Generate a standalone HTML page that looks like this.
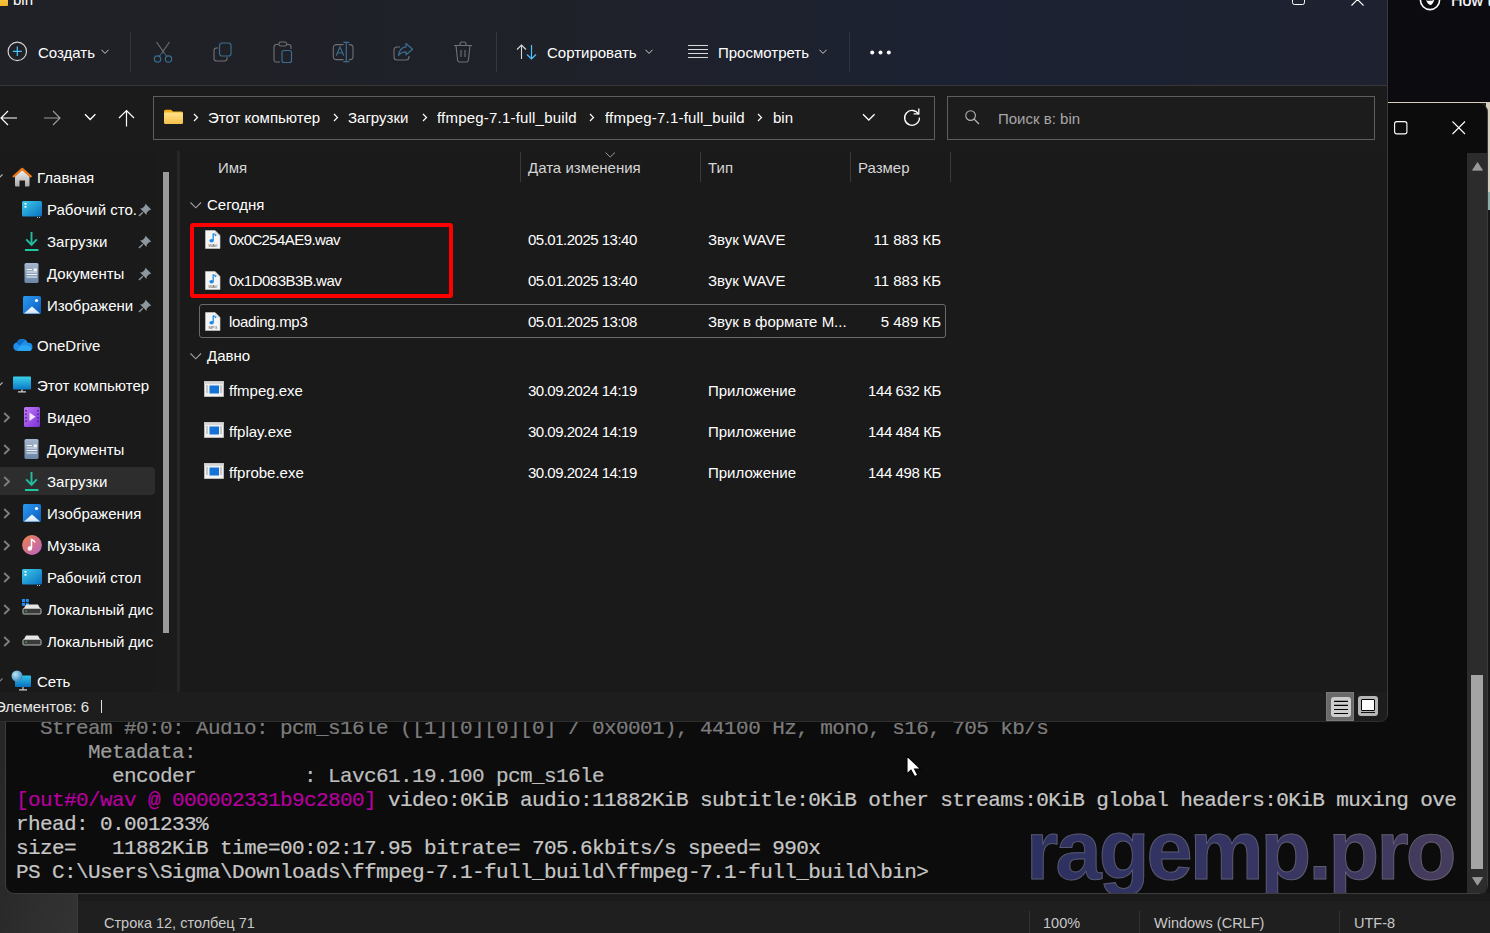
<!DOCTYPE html>
<html><head><meta charset="utf-8">
<style>
*{margin:0;padding:0;box-sizing:border-box}
html,body{width:1490px;height:933px;overflow:hidden;background:#1a1a1a;font-family:"Liberation Sans",sans-serif;color:#fff}
.a{position:absolute;white-space:pre}
.t{font-size:15px;line-height:18px}
svg{position:absolute;overflow:visible}
</style></head><body>
<!-- notepad status bar (bottom) -->
<div class="a" style="left:0;top:0;width:1490px;height:933px;background:#202020"></div>
<div class="a" style="left:0;top:700px;width:77px;height:233px;background:linear-gradient(100deg,#252525 0%,#2e2e2e 60%,#333 100%)"></div>
<div class="a" style="left:77px;top:893px;width:1413px;height:40px;background:#1f1f1f;border-left:1px solid #3a3a3a"></div>
<div class="a" style="left:78px;top:893px;width:1412px;height:8px;background:#1b1b1b"></div>
<div class="a" style="left:104px;top:915px;font-size:14.5px;line-height:17px;color:#c8c8c8">Строка 12, столбец 71</div>
<div class="a" style="left:1029px;top:911px;width:1px;height:22px;background:#333"></div>
<div class="a" style="left:1043px;top:915px;font-size:14.5px;line-height:17px;color:#c8c8c8">100%</div>
<div class="a" style="left:1139px;top:911px;width:1px;height:22px;background:#333"></div>
<div class="a" style="left:1154px;top:915px;font-size:14.5px;line-height:17px;color:#c8c8c8">Windows (CRLF)</div>
<div class="a" style="left:1339px;top:911px;width:1px;height:22px;background:#333"></div>
<div class="a" style="left:1354px;top:915px;font-size:14.5px;line-height:17px;color:#c8c8c8">UTF-8</div>
<!-- right dark area -->
<div class="a" style="left:1387px;top:0;width:103px;height:103px;background:#0b0b10"></div>
<svg style="left:1419px;top:-11px" width="22" height="22"><circle cx="11" cy="11" r="9.6" fill="none" stroke="#fff" stroke-width="1.6"/><path d="M7 11C8 14 10 16 12 16C13.5 15 15 12.5 15.5 10C14 11.5 13 12 12 11.5C10.5 12 8.5 12 7 11Z" fill="#fff"/></svg>
<div class="a" style="left:1451px;top:-8px;font-size:16px;line-height:18px;color:#fff;-webkit-text-stroke:0.2px #fff">How t</div>
<div class="a" style="left:1387px;top:102px;width:103px;height:1px;background:#d6cfbd"></div>
<div class="a" style="left:1486px;top:103px;width:4px;height:790px;background:#161616"></div><div class="a" style="left:1486px;top:103px;width:4px;height:89px;background:#d6cfbd"></div><div class="a" style="left:1486px;top:192px;width:4px;height:18px;background:#8fb0a8"></div>
<!-- terminal window -->
<div class="a" id="term" style="left:5px;top:103px;width:1483px;height:791px;background:#0c0c0c;border-radius:0 9px 9px 9px;border-left:1px solid #3c3c3c;border-bottom:1px solid #3c3c3c;border-right:1px solid #3a3a3a;overflow:hidden">
</div>
<svg style="left:1394px;top:121px" width="14" height="14"><rect x="0.6" y="0.6" width="12.3" height="12.3" rx="2.2" fill="none" stroke="#fff" stroke-width="1.1"/></svg>
<svg style="left:1452px;top:121px" width="14" height="14"><path d="M0.5 0.5L13 13M13 0.5L0.5 13" stroke="#fff" stroke-width="1.1"/></svg>
<div class="a" style="left:1467px;top:153px;width:20px;height:740px;background:#2c2c2c;border-radius:0 0 8px 0"></div>
<svg style="left:1472px;top:162px" width="11" height="9"><path d="M5.5 0.5L10.5 8.2H0.5Z" fill="#9a9a9a" stroke="#9a9a9a" stroke-width="0.8" stroke-linejoin="round"/></svg>
<div class="a" style="left:1471px;top:675px;width:12px;height:194px;background:#a4a4a4"></div>
<svg style="left:1472px;top:877px" width="11" height="9"><path d="M0.5 0.5H10.5L5.5 8.2Z" fill="#9a9a9a" stroke="#9a9a9a" stroke-width="0.8" stroke-linejoin="round"/></svg>
<!-- terminal text -->
<div class="a" style="left:16px;top:717px;font-family:'Liberation Mono',monospace;font-size:21px;letter-spacing:-0.6px;line-height:24px;color:#c6c6c6;-webkit-text-stroke:0.2px currentColor"><div style="color:#7c7c7c">  Stream #0:0: Audio: pcm_s16le ([1][0][0][0] / 0x0001), 44100 Hz, mono, s16, 705 kb/s</div><div style="color:#9c9c9c">      Metadata:</div><div style="color:#bdbdbd">        encoder         : Lavc61.19.100 pcm_s16le</div><div><span style="color:#b4009e">[out#0/wav @ 000002331b9c2800]</span> video:0KiB audio:11882KiB subtitle:0KiB other streams:0KiB global headers:0KiB muxing ove</div><div>rhead: 0.001233%</div><div>size=   11882KiB time=00:02:17.95 bitrate= 705.6kbits/s speed= 990x</div><div>PS C:\Users\Sigma\Downloads\ffmpeg-7.1-full_build\ffmpeg-7.1-full_build\bin&gt;</div></div>
<!-- watermark -->
<div class="a" style="left:1026px;top:801px;width:445px;height:92px;overflow:hidden">
<div class="a" style="left:0;top:0;font-size:83px;line-height:100px;font-weight:bold;letter-spacing:-2.9px;background:linear-gradient(90deg,#2d3160 0%,#353463 50%,#463c5d 100%);-webkit-background-clip:text;background-clip:text;color:transparent;-webkit-text-stroke:1px rgba(120,120,120,0.55)">ragemp.pro</div>
</div>
<!-- mouse cursor -->
<svg style="left:906px;top:755px" width="17" height="23"><path d="M1 1V19L5 15.2L8.6 21.5L11.8 20.2L8.6 14H14.6Z" fill="#fff" stroke="#000" stroke-width="1.1" stroke-linejoin="miter"/></svg>
<!-- EXPLORER -->
<div class="a" style="left:0;top:0;width:1388px;height:722px;background:#1b1b1b;border-radius:0 0 8px 0;overflow:hidden;border-right:1px solid #3a3a3a;border-bottom:1px solid #2e2e2e">
  <!-- mica top -->
  <div class="a" style="left:0;top:0;width:1387px;height:85px;background:linear-gradient(90deg,#202126 0%,#1f2129 40%,#1c2233 70%,#1e2230 100%)"></div>

  <!-- title -->
  <div class="a" style="left:0;top:-2px;width:8px;height:8px;background:linear-gradient(#f7c94a,#f2b52a);border-radius:0 1px 1px 0"></div>
  <div class="a" style="left:13px;top:-9px;font-size:15px;line-height:18px;color:#fff">bin</div>
  <svg style="left:1292px;top:-8px" width="13" height="13"><rect x="0.5" y="0.5" width="12" height="12" rx="2" fill="none" stroke="#fff" stroke-width="1"/></svg>
  <svg style="left:1351px;top:-7px" width="13" height="13"><path d="M0.5 0.5L12.5 12.5M12.5 0.5L0.5 12.5" stroke="#fff" stroke-width="1.1"/></svg>
  <!-- Создать -->
  <svg style="left:7px;top:41px" width="21" height="21"><circle cx="10.3" cy="10.4" r="9.2" fill="none" stroke="#d4d4d4" stroke-width="1.2"/><path d="M10.3 5.6V14.9M5.8 10.3H14.8" stroke="#4cc2ff" stroke-width="1.2"/></svg>
  <div class="a t" style="left:38px;top:44px">Создать</div>
  <svg style="left:101px;top:49px" width="9" height="6"><path d="M0.5 0.8L4 4.4L7.5 0.8" fill="none" stroke="#cfcfcf" stroke-width="1"/></svg>
  <div class="a" style="left:130px;top:32px;width:1px;height:40px;background:#34363c"></div>
  <!-- cut -->
  <svg style="left:153px;top:41px" width="20" height="22"><path d="M3.5 1L11.5 12.5M16.5 1L8.5 12.5" stroke="#6f7176" stroke-width="1.1" fill="none"/><path d="M11.5 12.5L14 15.5M8.5 12.5L6 15.5" stroke="#3b6d8e" stroke-width="1.1"/><circle cx="4.5" cy="18" r="3.2" fill="none" stroke="#3b6d8e" stroke-width="1.2"/><circle cx="15.5" cy="18" r="3.2" fill="none" stroke="#3b6d8e" stroke-width="1.2"/></svg>
  <!-- copy -->
  <svg style="left:213px;top:42px" width="20" height="20"><path d="M5 6H3.5A2.5 2.5 0 0 0 1 8.5V16.5A2.5 2.5 0 0 0 3.5 19H11.5A2.5 2.5 0 0 0 14 16.5V15" fill="none" stroke="#6f7176" stroke-width="1.1"/><rect x="6.5" y="1" width="11.5" height="13" rx="2.5" fill="none" stroke="#3b6d8e" stroke-width="1.2"/></svg>
  <!-- paste -->
  <svg style="left:273px;top:41px" width="20" height="22"><path d="M5.5 3.5H3.5A2.5 2.5 0 0 0 1 6V18.5A2.5 2.5 0 0 0 3.5 21H7M14 3.5H15.5A2.5 2.5 0 0 1 18 6V8" fill="none" stroke="#6f7176" stroke-width="1.1"/><rect x="6" y="1" width="7.5" height="4" rx="1.5" fill="none" stroke="#6f7176" stroke-width="1.1"/><rect x="9" y="9.5" width="9.5" height="12" rx="2" fill="none" stroke="#3b6d8e" stroke-width="1.2"/></svg>
  <!-- rename -->
  <svg style="left:332px;top:41px" width="22" height="22"><path d="M11.5 3.6H4.5A3.2 3.2 0 0 0 1.3 6.8V15.4A3.2 3.2 0 0 0 4.5 18.6H11.5M16.8 3.6H17.8A3.2 3.2 0 0 1 21 6.8V15.4A3.2 3.2 0 0 1 17.8 18.6H16.8" fill="none" stroke="#6f7176" stroke-width="1.1"/><path d="M4.2 14.8L8 6L11.8 14.8M5.4 12H10.6" fill="none" stroke="#3b6d8e" stroke-width="1.1"/><path d="M14.3 1.2V20.6M11.3 1.3H17.3M11.3 20.6H17.3" stroke="#3b6d8e" stroke-width="1.2"/></svg>
  <!-- share -->
  <svg style="left:393px;top:42px" width="21" height="20"><path d="M7 5H4A3 3 0 0 0 1 8V15A3 3 0 0 0 4 18H13A3 3 0 0 0 16 15V14" fill="none" stroke="#6f7176" stroke-width="1.1"/><path d="M13 1.5L19.5 7.3L13 12.8V9.8C9.5 9.8 7.3 11 5.5 13.5C6 9 8.5 5.3 13 4.8Z" fill="none" stroke="#3b6d8e" stroke-width="1.2" stroke-linejoin="round"/></svg>
  <!-- delete -->
  <svg style="left:453px;top:41px" width="20" height="22"><path d="M1 4.5H19M7 4.5V3A2 2 0 0 1 9 1H11A2 2 0 0 1 13 3V4.5M3 4.5L4.5 18.5A2.5 2.5 0 0 0 7 21H13A2.5 2.5 0 0 0 15.5 18.5L17 4.5M8 9V16M12 9V16" fill="none" stroke="#6f7176" stroke-width="1.1"/></svg>
  <div class="a" style="left:496px;top:32px;width:1px;height:40px;background:#343740"></div>
  <!-- sort -->
  <svg style="left:516px;top:44px" width="22" height="16"><path d="M5.5 15V1M1 5.5L5.5 1L10 5.5" fill="none" stroke="#d8d8d8" stroke-width="1.1"/><path d="M15.5 1V15M11 10.5L15.5 15L20 10.5" fill="none" stroke="#4cc2ff" stroke-width="1.2"/></svg>
  <div class="a t" style="left:547px;top:44px">Сортировать</div>
  <svg style="left:645px;top:49px" width="9" height="6"><path d="M0.5 0.8L4 4.4L7.5 0.8" fill="none" stroke="#cfcfcf" stroke-width="1"/></svg>
  <!-- view -->
  <svg style="left:688px;top:45px" width="21" height="14"><path d="M0 0.5H20M0 4.5H20M0 8.5H20M0 12.5H20" stroke="#d8d8d8" stroke-width="1.1"/></svg>
  <div class="a t" style="left:718px;top:44px">Просмотреть</div>
  <svg style="left:819px;top:49px" width="9" height="6"><path d="M0.5 0.8L4 4.4L7.5 0.8" fill="none" stroke="#cfcfcf" stroke-width="1"/></svg>
  <div class="a" style="left:849px;top:32px;width:1px;height:40px;background:#30343f"></div>
  <svg style="left:870px;top:50px" width="22" height="6"><circle cx="2.2" cy="2.5" r="2" fill="#fff"/><circle cx="10.5" cy="2.5" r="2" fill="#fff"/><circle cx="18.8" cy="2.5" r="2" fill="#fff"/></svg>
  <div class="a" style="left:0;top:85px;width:1387px;height:1px;background:#363636"></div>
  <!-- address row -->
  <div class="a" style="left:0;top:86px;width:1387px;height:65px;background:#1b1b1b"></div>

  <!-- nav arrows -->
  <svg style="left:0;top:110px" width="18" height="16"><path d="M17 8H1M8 1L1 8L8 15" fill="none" stroke="#fff" stroke-width="1.2"/></svg>
  <svg style="left:43px;top:110px" width="18" height="16"><path d="M1 8H17M10 1L17 8L10 15" fill="none" stroke="#9b9b9b" stroke-width="1.2"/></svg>
  <svg style="left:84px;top:113px" width="13" height="9"><path d="M1 1.2L6.2 6.5L11.4 1.2" fill="none" stroke="#fff" stroke-width="1.3"/></svg>
  <svg style="left:118px;top:109px" width="17" height="18"><path d="M8.5 17.5V1.5M1 9L8.5 1.5L16 9" fill="none" stroke="#fff" stroke-width="1.2"/></svg>
  <!-- address box -->
  <div class="a" style="left:153px;top:96px;width:782px;height:44px;border:1px solid #5e5e5e;background:#1c1c1c"></div>
  <svg style="left:164px;top:109px" width="20" height="16"><defs><linearGradient id="fg" x1="0" y1="0" x2="0" y2="1"><stop offset="0" stop-color="#ffe28a"/><stop offset="1" stop-color="#f5c04a"/></linearGradient></defs><path d="M1.5 0.8H7L9 2.6H17.5A1.5 1.5 0 0 1 19 4.1V5H0V2.3A1.5 1.5 0 0 1 1.5 0.8Z" fill="#f2b01e"/><rect x="0" y="3.6" width="19" height="11.5" rx="1.4" fill="url(#fg)"/></svg>
  <svg style="left:193px;top:113px" width="6" height="9"><path d="M1 1L4.5 4.5L1 8" fill="none" stroke="#fff" stroke-width="1.2"/></svg>
  <div class="a t" style="left:208px;top:109px">Этот компьютер</div>
  <svg style="left:333px;top:113px" width="6" height="9"><path d="M1 1L4.5 4.5L1 8" fill="none" stroke="#fff" stroke-width="1.2"/></svg>
  <div class="a t" style="left:348px;top:109px">Загрузки</div>
  <svg style="left:422px;top:113px" width="6" height="9"><path d="M1 1L4.5 4.5L1 8" fill="none" stroke="#fff" stroke-width="1.2"/></svg>
  <div class="a t" style="left:437px;top:109px;letter-spacing:0.2px">ffmpeg-7.1-full_build</div>
  <svg style="left:589px;top:113px" width="6" height="9"><path d="M1 1L4.5 4.5L1 8" fill="none" stroke="#fff" stroke-width="1.2"/></svg>
  <div class="a t" style="left:605px;top:109px;letter-spacing:0.2px">ffmpeg-7.1-full_build</div>
  <svg style="left:757px;top:113px" width="6" height="9"><path d="M1 1L4.5 4.5L1 8" fill="none" stroke="#fff" stroke-width="1.2"/></svg>
  <div class="a t" style="left:773px;top:109px">bin</div>
  <svg style="left:862px;top:113px" width="14" height="9"><path d="M1 1.3L6.8 7L12.6 1.3" fill="none" stroke="#fff" stroke-width="1.3"/></svg>
  <svg style="left:903px;top:108px" width="18" height="18"><path d="M15.6 6.5A7.4 7.4 0 1 0 16.4 9.5" fill="none" stroke="#fff" stroke-width="1.3"/><path d="M10.6 5.8H15.8V0.6" fill="none" stroke="#fff" stroke-width="1.3"/></svg>
  <!-- search box -->
  <div class="a" style="left:947px;top:96px;width:428px;height:44px;border:1px solid #5e5e5e;background:#1c1c1c"></div>
  <svg style="left:965px;top:110px" width="15" height="15"><circle cx="5.6" cy="5.6" r="4.8" fill="none" stroke="#b4b4b4" stroke-width="1.1"/><path d="M9 9L14 14" stroke="#b4b4b4" stroke-width="1.2"/></svg>
  <div class="a t" style="left:998px;top:110px;color:#a8a8a8">Поиск в: bin</div>
  <!-- content -->
  <div class="a" style="left:0;top:151px;width:1387px;height:541px;background:#1a1a1a"></div>

  <!-- NAV PANE -->
  <div class="a" style="left:155px;top:151px;width:22px;height:541px;background:#1b1b1b"></div>
  <div class="a" style="left:163px;top:172px;width:6px;height:461px;background:#9b9b9b"></div>
  <div class="a" style="left:177px;top:151px;width:3px;height:541px;background:#262626"></div>
  <div class="a" style="left:0;top:467px;width:155px;height:28px;background:#2d2d2d;border-radius:0 4px 4px 0"></div>
  <svg style="left:-4px;top:174px" width="7" height="5"><path d="M0.5 0.5L3.5 3.5L6.5 0.5" fill="none" stroke="#bbb" stroke-width="1.1"/></svg>
  <svg style="left:-4px;top:382px" width="7" height="5"><path d="M0.5 0.5L3.5 3.5L6.5 0.5" fill="none" stroke="#bbb" stroke-width="1.1"/></svg>
  <svg style="left:12px;top:167px" width="21" height="20"><defs><linearGradient id="hm" x1="0" y1="0" x2="0" y2="1"><stop offset="0" stop-color="#f0f0f0"/><stop offset="1" stop-color="#a8a8a8"/></linearGradient></defs><path d="M3 9.5L10.2 3L17.5 9.5V18.5A1 1 0 0 1 16.5 19.5H13V13.5H7.5V19.5H4A1 1 0 0 1 3 18.5Z" fill="url(#hm)"/><path d="M1 10L10.2 1.8L19.5 10" fill="none" stroke="#f07a1a" stroke-width="2.2" stroke-linejoin="round"/></svg>
  <div class="a t" style="left:37px;top:169px">Главная</div>
  <svg style="left:22px;top:201px" width="20" height="17"><defs><linearGradient id="dk201" x1="0" y1="0" x2="1" y2="1"><stop offset="0" stop-color="#3ccbe8"/><stop offset="1" stop-color="#0a6fc2"/></linearGradient></defs><rect x="0" y="0" width="20" height="15.5" rx="1.5" fill="url(#dk201)"/><rect x="2.5" y="2" width="2" height="1.6" fill="#fff"/><rect x="2.5" y="5" width="2" height="1.6" fill="#fff"/><rect x="15" y="16" width="1" height="1" fill="#bbb"/><rect x="17" y="16" width="1" height="1" fill="#bbb"/></svg>
  <div class="a t" style="left:47px;top:201px">Рабочий сто.</div>
  <svg style="left:138px;top:203px" width="14" height="14"><path d="M7.5 0.8L13.2 6.5L11.2 7.2L8.8 9.6L8.6 12L2 5.4L4.4 5.2L6.8 2.8Z" fill="#8e979e"/><path d="M4.8 9.2L1 13" stroke="#8e979e" stroke-width="1.4"/></svg>
  <svg style="left:24px;top:231px" width="16" height="21"><path d="M7.5 1V13.8M2.2 8.3L7.5 13.8L12.8 8.3" fill="none" stroke="#22bf9f" stroke-width="1.9"/><path d="M1 19H14.5" stroke="#1fc6a2" stroke-width="2"/></svg>
  <div class="a t" style="left:47px;top:233px">Загрузки</div>
  <svg style="left:138px;top:235px" width="14" height="14"><path d="M7.5 0.8L13.2 6.5L11.2 7.2L8.8 9.6L8.6 12L2 5.4L4.4 5.2L6.8 2.8Z" fill="#8e979e"/><path d="M4.8 9.2L1 13" stroke="#8e979e" stroke-width="1.4"/></svg>
  <svg style="left:24px;top:263px" width="16" height="21"><defs><linearGradient id="dc263" x1="0" y1="0" x2="0" y2="1"><stop offset="0" stop-color="#a6b7cc"/><stop offset="1" stop-color="#6d87a8"/></linearGradient></defs><rect x="0.5" y="0" width="14" height="20" rx="1.5" fill="url(#dc263)"/><path d="M2.5 6.5H8M2.5 9H13M2.5 11.5H13M2.5 14H13" stroke="#f2f4f7" stroke-width="1"/><rect x="9.5" y="5.5" width="3.5" height="2.5" fill="#f2f4f7"/></svg>
  <div class="a t" style="left:47px;top:265px">Документы</div>
  <svg style="left:138px;top:267px" width="14" height="14"><path d="M7.5 0.8L13.2 6.5L11.2 7.2L8.8 9.6L8.6 12L2 5.4L4.4 5.2L6.8 2.8Z" fill="#8e979e"/><path d="M4.8 9.2L1 13" stroke="#8e979e" stroke-width="1.4"/></svg>
  <svg style="left:23px;top:296px" width="19" height="19"><defs><linearGradient id="pc296" x1="0" y1="0" x2="1" y2="1"><stop offset="0" stop-color="#2b9af0"/><stop offset="1" stop-color="#0a5cc0"/></linearGradient><linearGradient id="pm296" x1="0" y1="0" x2="0" y2="1"><stop offset="0" stop-color="#ffffff"/><stop offset="1" stop-color="#cfe3f7"/></linearGradient></defs><rect x="0" y="0" width="18" height="18" rx="1.6" fill="url(#pc296)"/><path d="M1 17.5L9 10.5L17 17.5Z" fill="url(#pm296)"/><circle cx="13.5" cy="4.5" r="1.6" fill="#fff"/></svg>
  <div class="a t" style="left:47px;top:297px;width:90px;overflow:hidden">Изображени</div>
  <svg style="left:138px;top:299px" width="14" height="14"><path d="M7.5 0.8L13.2 6.5L11.2 7.2L8.8 9.6L8.6 12L2 5.4L4.4 5.2L6.8 2.8Z" fill="#8e979e"/><path d="M4.8 9.2L1 13" stroke="#8e979e" stroke-width="1.4"/></svg>
  <svg style="left:12px;top:337px" width="21" height="15"><path d="M5 13.8A4.2 4.2 0 0 1 4.8 5.5A6 6 0 0 1 15.8 5.8A4 4 0 0 1 17 13.8Z" fill="#1f8ee8"/><path d="M5 13.8C6.5 9 10 7.5 13.5 8.5C16.5 8 19.5 10 19.5 12A2 2 0 0 1 17.5 14Z" fill="#2aa6f5"/><path d="M4.8 5.5A6 6 0 0 1 13 3.5C11 5 9 7 8 8.5C6 7.5 5 6.5 4.8 5.5Z" fill="#0e6ecb"/></svg>
  <div class="a t" style="left:37px;top:337px">OneDrive</div>
  <svg style="left:13px;top:376px" width="19" height="17"><defs><linearGradient id="mn" x1="0" y1="0" x2="0" y2="1"><stop offset="0" stop-color="#38d2e8"/><stop offset="1" stop-color="#0c78c8"/></linearGradient></defs><rect x="0" y="0.5" width="18" height="13" rx="0.8" fill="url(#mn)"/><path d="M9 13.5V15.5M5 15.8H13" stroke="#cfcfcf" stroke-width="1.3"/></svg>
  <div class="a t" style="left:37px;top:377px">Этот компьютер</div>
  <svg style="left:3px;top:412px" width="8" height="11"><path d="M1.2 1L6 5.5L1.2 10" fill="none" stroke="#808080" stroke-width="1.8"/></svg>
  <svg style="left:24px;top:407px" width="17" height="20"><defs><linearGradient id="vd" x1="0" y1="0" x2="1" y2="1"><stop offset="0" stop-color="#c27af7"/><stop offset="1" stop-color="#7a2fd6"/></linearGradient></defs><rect x="0" y="0" width="16" height="20" rx="1.5" fill="url(#vd)"/><path d="M5.5 5.5L11.5 9.8L5.5 14Z" fill="#f0e6fb"/><g fill="#3a1a6a"><rect x="1.3" y="3" width="1.4" height="1.4"/><rect x="1.3" y="6.5" width="1.4" height="1.4"/><rect x="1.3" y="10" width="1.4" height="1.4"/><rect x="1.3" y="13.5" width="1.4" height="1.4"/><rect x="13.3" y="3" width="1.4" height="1.4"/><rect x="13.3" y="6.5" width="1.4" height="1.4"/><rect x="13.3" y="10" width="1.4" height="1.4"/><rect x="13.3" y="13.5" width="1.4" height="1.4"/></g></svg>
  <div class="a t" style="left:47px;top:409px">Видео</div>
  <svg style="left:3px;top:444px" width="8" height="11"><path d="M1.2 1L6 5.5L1.2 10" fill="none" stroke="#808080" stroke-width="1.8"/></svg>
  <svg style="left:24px;top:439px" width="16" height="21"><defs><linearGradient id="dc439" x1="0" y1="0" x2="0" y2="1"><stop offset="0" stop-color="#a6b7cc"/><stop offset="1" stop-color="#6d87a8"/></linearGradient></defs><rect x="0.5" y="0" width="14" height="20" rx="1.5" fill="url(#dc439)"/><path d="M2.5 6.5H8M2.5 9H13M2.5 11.5H13M2.5 14H13" stroke="#f2f4f7" stroke-width="1"/><rect x="9.5" y="5.5" width="3.5" height="2.5" fill="#f2f4f7"/></svg>
  <div class="a t" style="left:47px;top:441px">Документы</div>
  <svg style="left:3px;top:476px" width="8" height="11"><path d="M1.2 1L6 5.5L1.2 10" fill="none" stroke="#808080" stroke-width="1.8"/></svg>
  <svg style="left:24px;top:471px" width="16" height="21"><path d="M7.5 1V13.8M2.2 8.3L7.5 13.8L12.8 8.3" fill="none" stroke="#22bf9f" stroke-width="1.9"/><path d="M1 19H14.5" stroke="#1fc6a2" stroke-width="2"/></svg>
  <div class="a t" style="left:47px;top:473px">Загрузки</div>
  <svg style="left:3px;top:508px" width="8" height="11"><path d="M1.2 1L6 5.5L1.2 10" fill="none" stroke="#808080" stroke-width="1.8"/></svg>
  <svg style="left:23px;top:504px" width="19" height="19"><defs><linearGradient id="pc504" x1="0" y1="0" x2="1" y2="1"><stop offset="0" stop-color="#2b9af0"/><stop offset="1" stop-color="#0a5cc0"/></linearGradient><linearGradient id="pm504" x1="0" y1="0" x2="0" y2="1"><stop offset="0" stop-color="#ffffff"/><stop offset="1" stop-color="#cfe3f7"/></linearGradient></defs><rect x="0" y="0" width="18" height="18" rx="1.6" fill="url(#pc504)"/><path d="M1 17.5L9 10.5L17 17.5Z" fill="url(#pm504)"/><circle cx="13.5" cy="4.5" r="1.6" fill="#fff"/></svg>
  <div class="a t" style="left:47px;top:505px">Изображения</div>
  <svg style="left:3px;top:540px" width="8" height="11"><path d="M1.2 1L6 5.5L1.2 10" fill="none" stroke="#808080" stroke-width="1.8"/></svg>
  <svg style="left:22px;top:535px" width="20" height="20"><defs><linearGradient id="mu" x1="0" y1="0" x2="1" y2="1"><stop offset="0" stop-color="#f0834a"/><stop offset="1" stop-color="#b962c8"/></linearGradient></defs><circle cx="10" cy="10" r="9.9" fill="url(#mu)"/><path d="M9.5 13.2V4.5C11 5 12.5 6 13 7.5" fill="none" stroke="#fff" stroke-width="1.5"/><circle cx="7.8" cy="13.5" r="2.2" fill="#fff"/></svg>
  <div class="a t" style="left:47px;top:537px">Музыка</div>
  <svg style="left:3px;top:572px" width="8" height="11"><path d="M1.2 1L6 5.5L1.2 10" fill="none" stroke="#808080" stroke-width="1.8"/></svg>
  <svg style="left:22px;top:569px" width="20" height="17"><defs><linearGradient id="dk569" x1="0" y1="0" x2="1" y2="1"><stop offset="0" stop-color="#3ccbe8"/><stop offset="1" stop-color="#0a6fc2"/></linearGradient></defs><rect x="0" y="0" width="20" height="15.5" rx="1.5" fill="url(#dk569)"/><rect x="2.5" y="2" width="2" height="1.6" fill="#fff"/><rect x="2.5" y="5" width="2" height="1.6" fill="#fff"/><rect x="15" y="16" width="1" height="1" fill="#bbb"/><rect x="17" y="16" width="1" height="1" fill="#bbb"/></svg>
  <div class="a t" style="left:47px;top:569px">Рабочий стол</div>
  <svg style="left:3px;top:604px" width="8" height="11"><path d="M1.2 1L6 5.5L1.2 10" fill="none" stroke="#808080" stroke-width="1.8"/></svg>
  <svg style="left:22px;top:599px" width="20" height="17"><rect x="0" y="0" width="3" height="3" fill="#1f8ff0"/><rect x="3.8" y="0" width="3" height="3" fill="#1f8ff0"/><rect x="0" y="3.8" width="3" height="3" fill="#1f8ff0"/><rect x="3.8" y="3.8" width="3" height="3" fill="#1f8ff0"/><path d="M4 5.5H16L18.5 10H1.5Z" fill="#e6e6e6"/><rect x="1" y="9.5" width="18" height="5.5" rx="0.8" fill="#3a3a3a" stroke="#b8b8b8" stroke-width="1"/><rect x="3.5" y="11.5" width="1.3" height="1.3" fill="#3fd64a"/></svg>
  <div class="a t" style="left:47px;top:601px;width:107px;overflow:hidden">Локальный дис</div>
  <svg style="left:3px;top:636px" width="8" height="11"><path d="M1.2 1L6 5.5L1.2 10" fill="none" stroke="#808080" stroke-width="1.8"/></svg>
  <svg style="left:22px;top:630px" width="20" height="17"><path d="M4 5.5H16L18.5 10H1.5Z" fill="#e6e6e6"/><rect x="1" y="9.5" width="18" height="5.5" rx="0.8" fill="#3a3a3a" stroke="#b8b8b8" stroke-width="1"/><rect x="3.5" y="11.5" width="1.3" height="1.3" fill="#3fd64a"/></svg>
  <div class="a t" style="left:47px;top:633px;width:107px;overflow:hidden">Локальный дис</div>
  <svg style="left:-4px;top:678px" width="7" height="5"><path d="M0.5 0.5L3.5 3.5L6.5 0.5" fill="none" stroke="#888" stroke-width="1.1"/></svg>
  <svg style="left:11px;top:670px" width="22" height="22"><defs><linearGradient id="nw" x1="0" y1="0" x2="0" y2="1"><stop offset="0" stop-color="#2ec4ea"/><stop offset="1" stop-color="#0b6fc0"/></linearGradient><radialGradient id="gl" cx="0.35" cy="0.35" r="0.7"><stop offset="0" stop-color="#b9e4f7"/><stop offset="1" stop-color="#3a89c0"/></radialGradient></defs><rect x="4" y="5.5" width="16" height="11.5" rx="0.8" fill="url(#nw)"/><path d="M12 17V19.5M8 19.8H16" stroke="#cfcfcf" stroke-width="1.2"/><circle cx="6" cy="6" r="5.5" fill="url(#gl)"/></svg>
  <div class="a t" style="left:37px;top:673px">Сеть</div>

  <!-- FILE LIST -->
  <div class="a t" style="left:218px;top:159px;color:#d6d6d6">Имя</div>
  <div class="a" style="left:520px;top:152px;width:1px;height:30px;background:#3a3a3a"></div>
  <svg style="left:605px;top:152px" width="11" height="6"><path d="M0.5 0.5L5.2 5L10 0.5" fill="none" stroke="#9a9a9a" stroke-width="1"/></svg>
  <div class="a t" style="left:528px;top:159px;color:#d6d6d6">Дата изменения</div>
  <div class="a" style="left:700px;top:152px;width:1px;height:30px;background:#3a3a3a"></div>
  <div class="a t" style="left:708px;top:159px;color:#d6d6d6">Тип</div>
  <div class="a" style="left:850px;top:152px;width:1px;height:30px;background:#3a3a3a"></div>
  <div class="a t" style="left:858px;top:159px;color:#d6d6d6">Размер</div>
  <div class="a" style="left:950px;top:152px;width:1px;height:30px;background:#3a3a3a"></div>
  <svg style="left:190px;top:202px" width="12" height="7"><path d="M0.5 0.5L5.8 5.8L11 0.5" fill="none" stroke="#a0a0a0" stroke-width="1.1"/></svg>
  <div class="a t" style="left:207px;top:196px">Сегодня</div>
  <svg style="left:205px;top:230px" width="16" height="19"><path d="M0.5 0.5H10L15 5.5V18.5H0.5Z" fill="#f4f4f4" stroke="#d0d0d0" stroke-width="0.6"/><path d="M10 0.5V5.5H15" fill="#dcdcdc"/><path d="M8.2 3.5V10.5M8.2 3.5C9.5 4 10.5 4.8 10.8 6" fill="none" stroke="#1a8ae6" stroke-width="1.3"/><ellipse cx="6.6" cy="10.8" rx="2.2" ry="1.7" fill="#1a8ae6"/><text x="7.7" y="17.3" font-family="Liberation Sans" font-size="4.2" fill="#555" text-anchor="middle">WAV</text></svg>
  <div class="a t" style="letter-spacing:-0.6px;left:229px;top:231px">0x0C254AE9.wav</div>
  <div class="a t" style="letter-spacing:-0.5px;left:528px;top:231px">05.01.2025 13:40</div>
  <div class="a t" style="left:708px;top:231px">Звук WAVE</div>
  <div class="a t" style="left:841px;top:231px;width:100px;text-align:right">11 883 КБ</div>
  <svg style="left:205px;top:271px" width="16" height="19"><path d="M0.5 0.5H10L15 5.5V18.5H0.5Z" fill="#f4f4f4" stroke="#d0d0d0" stroke-width="0.6"/><path d="M10 0.5V5.5H15" fill="#dcdcdc"/><path d="M8.2 3.5V10.5M8.2 3.5C9.5 4 10.5 4.8 10.8 6" fill="none" stroke="#1a8ae6" stroke-width="1.3"/><ellipse cx="6.6" cy="10.8" rx="2.2" ry="1.7" fill="#1a8ae6"/><text x="7.7" y="17.3" font-family="Liberation Sans" font-size="4.2" fill="#555" text-anchor="middle">WAV</text></svg>
  <div class="a t" style="letter-spacing:-0.5px;left:229px;top:272px">0x1D083B3B.wav</div>
  <div class="a t" style="letter-spacing:-0.5px;left:528px;top:272px">05.01.2025 13:40</div>
  <div class="a t" style="left:708px;top:272px">Звук WAVE</div>
  <div class="a t" style="left:841px;top:272px;width:100px;text-align:right">11 883 КБ</div>
  <div class="a" style="left:190px;top:223px;width:263px;height:75px;border:4px solid #ff0000;border-radius:3px"></div>
  <div class="a" style="left:199px;top:304px;width:747px;height:34px;border:1px solid #6a6a6a;border-radius:3px"></div>
  <svg style="left:205px;top:312px" width="16" height="19"><path d="M0.5 0.5H10L15 5.5V18.5H0.5Z" fill="#f4f4f4" stroke="#d0d0d0" stroke-width="0.6"/><path d="M10 0.5V5.5H15" fill="#dcdcdc"/><path d="M8.2 3.5V10.5M8.2 3.5C9.5 4 10.5 4.8 10.8 6" fill="none" stroke="#1a8ae6" stroke-width="1.3"/><ellipse cx="6.6" cy="10.8" rx="2.2" ry="1.7" fill="#1a8ae6"/><text x="7.7" y="17.3" font-family="Liberation Sans" font-size="4.2" fill="#555" text-anchor="middle">MP3</text></svg>
  <div class="a t" style="letter-spacing:-0.3px;left:229px;top:313px">loading.mp3</div>
  <div class="a t" style="letter-spacing:-0.5px;left:528px;top:313px">05.01.2025 13:08</div>
  <div class="a t" style="left:708px;top:313px">Звук в формате М...</div>
  <div class="a t" style="left:841px;top:313px;width:100px;text-align:right">5 489 КБ</div>
  <svg style="left:190px;top:353px" width="12" height="7"><path d="M0.5 0.5L5.8 5.8L11 0.5" fill="none" stroke="#a0a0a0" stroke-width="1.1"/></svg>
  <div class="a t" style="left:207px;top:347px">Давно</div>
  <svg style="left:204px;top:381px" width="20" height="16"><rect x="0.5" y="0.5" width="19" height="15" fill="#f2f2f2" stroke="#c8c8c8" stroke-width="0.8"/><rect x="0.5" y="0.5" width="19" height="2.6" fill="#d6d6d6"/><rect x="5.5" y="4.5" width="9.5" height="8" fill="#1473d6"/><path d="M2 5H4M2 7H4M2 9H4M2 11H4M16 5H18M16 7H18M16 9H18M16 11H18" stroke="#8a8a8a" stroke-width="0.8"/></svg>
  <div class="a t" style="left:229px;top:382px">ffmpeg.exe</div>
  <div class="a t" style="letter-spacing:-0.5px;left:528px;top:382px">30.09.2024 14:19</div>
  <div class="a t" style="left:708px;top:382px">Приложение</div>
  <div class="a t" style="letter-spacing:-0.4px;left:841px;top:382px;width:100px;text-align:right">144 632 КБ</div>
  <svg style="left:204px;top:422px" width="20" height="16"><rect x="0.5" y="0.5" width="19" height="15" fill="#f2f2f2" stroke="#c8c8c8" stroke-width="0.8"/><rect x="0.5" y="0.5" width="19" height="2.6" fill="#d6d6d6"/><rect x="5.5" y="4.5" width="9.5" height="8" fill="#1473d6"/><path d="M2 5H4M2 7H4M2 9H4M2 11H4M16 5H18M16 7H18M16 9H18M16 11H18" stroke="#8a8a8a" stroke-width="0.8"/></svg>
  <div class="a t" style="left:229px;top:423px">ffplay.exe</div>
  <div class="a t" style="letter-spacing:-0.5px;left:528px;top:423px">30.09.2024 14:19</div>
  <div class="a t" style="left:708px;top:423px">Приложение</div>
  <div class="a t" style="letter-spacing:-0.4px;left:841px;top:423px;width:100px;text-align:right">144 484 КБ</div>
  <svg style="left:204px;top:463px" width="20" height="16"><rect x="0.5" y="0.5" width="19" height="15" fill="#f2f2f2" stroke="#c8c8c8" stroke-width="0.8"/><rect x="0.5" y="0.5" width="19" height="2.6" fill="#d6d6d6"/><rect x="5.5" y="4.5" width="9.5" height="8" fill="#1473d6"/><path d="M2 5H4M2 7H4M2 9H4M2 11H4M16 5H18M16 7H18M16 9H18M16 11H18" stroke="#8a8a8a" stroke-width="0.8"/></svg>
  <div class="a t" style="left:229px;top:464px">ffprobe.exe</div>
  <div class="a t" style="letter-spacing:-0.5px;left:528px;top:464px">30.09.2024 14:19</div>
  <div class="a t" style="left:708px;top:464px">Приложение</div>
  <div class="a t" style="letter-spacing:-0.4px;left:841px;top:464px;width:100px;text-align:right">144 498 КБ</div>

  <!-- status bar -->
  <div class="a" style="left:0;top:692px;width:1387px;height:30px;background:#1d1d1d"></div>
  <div class="a t" style="left:-5px;top:698px;color:#e6e6e6">Элементов: 6</div>
  <div class="a" style="left:101px;top:700px;width:1px;height:13px;background:#e0e0e0"></div>
  <div class="a" style="left:1326px;top:692px;width:28px;height:29px;background:#6a6a6a;border:1px solid #7a7a7a"></div>
  <div class="a" style="left:1331px;top:697px;width:20px;height:20px;background:#cdcdcd;border-radius:3px"></div>
  <svg style="left:1334px;top:700px" width="14" height="15"><path d="M0 1.4H14M0 5.4H14M0 9.5H14M0 13.5H14" stroke="#000" stroke-width="1.1"/></svg>
  <div class="a" style="left:1358px;top:696px;width:20px;height:20px;background:#b5b5b5;border-radius:3px"></div>
  <div class="a" style="left:1361px;top:699px;width:14px;height:12px;background:#fff;border:1px solid #000;border-radius:1px"></div>
  <div class="a" style="left:1361px;top:712px;width:14px;height:1px;background:#111"></div>

</div>
</body></html>
